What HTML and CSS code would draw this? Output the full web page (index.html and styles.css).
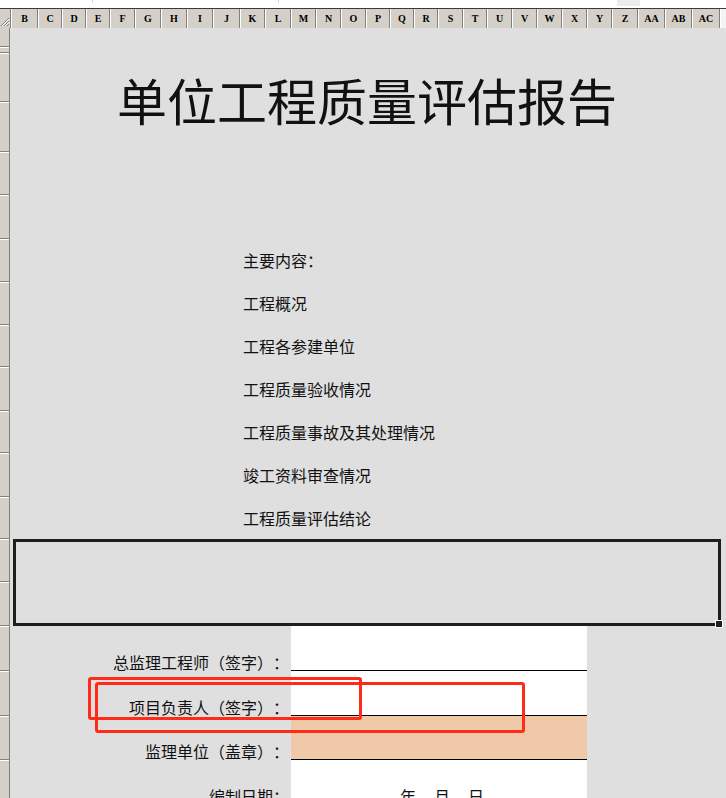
FILE: index.html
```html
<!DOCTYPE html>
<html lang="zh">
<head>
  <meta charset="UTF-8" />
  <title>单位工程质量评估报告</title>
  <link rel="stylesheet" href="styles.css">
</head>
<body>
  <div class="topstrip">
    <span class="mark mark-a"></span>
    <span class="mark mark-b"></span>
    <span class="scrollbit"></span>
  </div>

  <div class="colheads">
    <div class="corner">
      <svg width="10" height="18" viewBox="0 0 10 18">
        <path d="M9 8 L1 16 M9 11 L4 16 M9 14 L7 16" stroke="#808080" stroke-width="1" fill="none"/>
        <path d="M9 9 L2 16 M9 12 L5 16" stroke="#ffffff" stroke-width="1" fill="none"/>
      </svg>
    </div>
    <div class="col w27">B</div>
    <div class="col w24">C</div>
    <div class="col w24">D</div>
    <div class="col w24">E</div>
    <div class="col w25">F</div>
    <div class="col w26">G</div>
    <div class="col w26">H</div>
    <div class="col w26">I</div>
    <div class="col w27">J</div>
    <div class="col w25">K</div>
    <div class="col w26">L</div>
    <div class="col w25">M</div>
    <div class="col w25">N</div>
    <div class="col w25">O</div>
    <div class="col w24">P</div>
    <div class="col w24">Q</div>
    <div class="col w24">R</div>
    <div class="col w25">S</div>
    <div class="col w24">T</div>
    <div class="col w25">U</div>
    <div class="col w25">V</div>
    <div class="col w25">W</div>
    <div class="col w25">X</div>
    <div class="col w25">Y</div>
    <div class="col w26">Z</div>
    <div class="col w27">AA</div>
    <div class="col w27">AB</div>
    <div class="col w28">AC</div>
    <div class="col rest"></div>
  </div>

  <div class="grid-area">
    <div class="rowheads">
      <div class="rh"></div><div class="rh"></div><div class="rh"></div><div class="rh"></div>
      <div class="rh"></div><div class="rh"></div><div class="rh"></div><div class="rh"></div>
      <div class="rh"></div><div class="rh"></div><div class="rh"></div><div class="rh"></div>
      <div class="rh"></div><div class="rh"></div><div class="rh"></div><div class="rh"></div>
      <div class="rh"></div><div class="rh"></div><div class="rh"></div>
    </div>

    <div class="sheet">
      <div class="span2"></div>
      <h1 class="title span2">单位工程质量评估报告</h1>
      <div class="span2"></div>

      <div class="item">主要内容：</div>
      <div class="item">工程概况</div>
      <div class="item">工程各参建单位</div>
      <div class="item">工程质量验收情况</div>
      <div class="item">工程质量事故及其处理情况</div>
      <div class="item">竣工资料审查情况</div>
      <div class="item">工程质量评估结论</div>

      <div class="span2 box-wrap">
        <div class="sel-box">
          <span class="handle"></span>
        </div>
      </div>

      <div class="form-row">
        <div class="label">总监理工程师（签字）：</div>
        <div class="value line"></div>
      </div>
      <div class="form-row">
        <div class="label">项目负责人（签字）：</div>
        <div class="value line"></div>
      </div>
      <div class="form-row">
        <div class="label">监理单位（盖章）：</div>
        <div class="value line peach"></div>
      </div>
      <div class="form-row">
        <div class="label">编制日期：</div>
        <div class="value date"><span>年</span><span>月</span><span>日</span></div>
      </div>
    </div>
  </div>

  <div class="note note-a"></div>
  <div class="note note-b"></div>
</body>
</html>
```

FILE: styles.css
```css
:root {
  --head-gray: #d4d0c8;
  --sheet-gray: #dfdfdf;
  --edge-dark: #808080;
  --ink: #111111;
  --peach: #f0caa8;
  --note-red: #ff2a1a;
  --rows: 19px 6px 49px 50px 43px 44px 43px 43px 42px 44px 42px 44px 42px 43px 44px 45px 45px 44px 45px;
}
html, body {
  margin: 0;
  height: 100%;
  overflow: hidden;
}
body {
  background: var(--sheet-gray);
  font-family: "Noto Sans CJK SC", "Noto Sans", sans-serif;
  color: var(--ink);
  position: relative;
  text-spacing-trim: space-all;
}

.topstrip {
  height: 8px;
  background: #ffffff;
  border-bottom: 1px solid #3a3a3a;
  position: relative;
}
.mark {
  position: absolute;
  top: 0;
  width: 1px;
  height: 3px;
  background: #d8d8d8;
}
.mark-a { left: 92px; }
.mark-b { left: 278px; }
.scrollbit {
  position: absolute;
  left: 617px;
  top: 0;
  width: 23px;
  height: 6px;
  background: #ececec;
}

.colheads {
  display: flex;
  height: 19px;
  background: var(--head-gray);
}
.corner {
  width: 10px;
  border-right: 1px solid var(--edge-dark);
  display: flex;
  align-items: flex-end;
}
.col {
  box-sizing: border-box;
  border-left: 1px solid #ffffff;
  border-right: 1px solid var(--edge-dark);
  font-family: "Liberation Serif", serif;
  font-weight: bold;
  font-size: 10px;
  display: flex;
  align-items: center;
  justify-content: center;
  color: #000;
}
.w24 { width: 24px; }
.w25 { width: 25px; }
.w26 { width: 26px; }
.w27 { width: 27px; }
.w28 { width: 28px; }
.rest { flex: 1; border-right: none; background: #f4f4f4; }

.grid-area {
  display: grid;
  grid-template-columns: 10px 1fr;
}
.rowheads {
  display: grid;
  grid-template-rows: var(--rows);
  background: var(--head-gray);
  border-right: 1px solid var(--edge-dark);
  box-sizing: border-box;
}
.rh {
  border-top: 1px solid #ffffff;
  border-bottom: 1px solid var(--edge-dark);
}
.rh:first-child { border-top: none; }

.sheet {
  display: grid;
  grid-template-rows: var(--rows);
}
.span2 { grid-row: span 2; }

.title {
  margin: 0;
  font-size: 50px;
  font-weight: 400;
  letter-spacing: 0;
  display: flex;
  align-items: center;
  justify-content: center;
  padding-bottom: 8px;
  padding-right: 2px;
}

.item {
  font-size: 16px;
  padding-left: 233px;
  display: flex;
  align-items: center;
  padding-bottom: 1px;
}

.box-wrap {
  padding: 0 5px 0 3px;
}
.sel-box {
  height: 100%;
  box-sizing: border-box;
  border: 3px solid #1f1f1f;
  position: relative;
}
.handle {
  position: absolute;
  right: -5px;
  bottom: -5px;
  width: 6px;
  height: 6px;
  background: #1f1f1f;
  border: 1px solid #ffffff;
}

.form-row {
  display: grid;
  grid-template-columns: 281px 296px 1fr;
}
.label {
  font-size: 16px;
  line-height: 16px;
  text-align: right;
  padding-right: 2px;
  display: flex;
  align-items: flex-end;
  justify-content: flex-end;
  padding-bottom: 1px;
}
.value {
  background: #ffffff;
}
.value.line {
  border-bottom: 1px solid #000;
}
.value.peach {
  background: var(--peach);
}
.value.date {
  display: flex;
  align-items: flex-end;
  gap: 18px;
  padding-left: 109px;
  font-size: 16px;
  line-height: 16px;
}
.value.date span {
  padding-bottom: 1px;
}

.note {
  position: absolute;
  border: 3px solid var(--note-red);
  border-radius: 3px;
  box-sizing: border-box;
}
.note-a {
  left: 88px;
  top: 677px;
  width: 274px;
  height: 43px;
}
.note-b {
  left: 95px;
  top: 682px;
  width: 430px;
  height: 51px;
}
```
